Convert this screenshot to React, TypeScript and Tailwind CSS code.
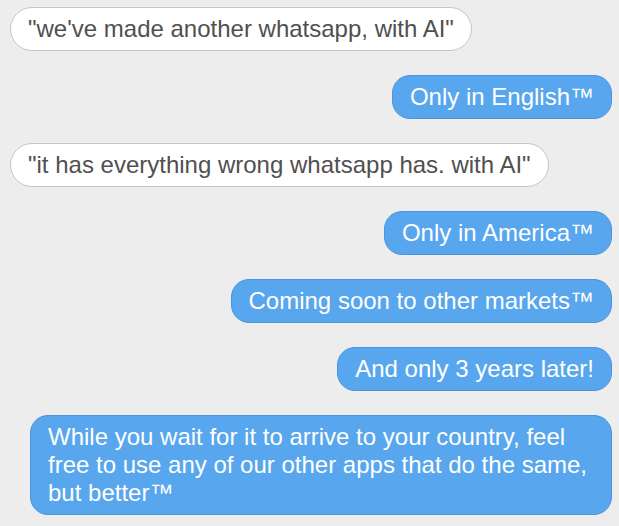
import React from 'react';

type Msg = { text: string; mine: boolean };

const messages: Msg[] = [
  { text: '"we\'ve made another whatsapp, with AI"', mine: false },
  { text: 'Only in English™', mine: true },
  { text: '"it has everything wrong whatsapp has. with AI"', mine: false },
  { text: 'Only in America™', mine: true },
  { text: 'Coming soon to other markets™', mine: true },
  { text: 'And only 3 years later!', mine: true },
  {
    text: 'While you wait for it to arrive to your country, feel free to use any of our other apps that do the same, but better™',
    mine: true,
  },
];

const Bubble: React.FC<{ msg: Msg }> = ({ msg }) => (
  <div className={msg.mine ? 'flex justify-end' : 'flex justify-start'}>
    <div
      className={
        msg.mine
          ? 'max-w-[582px] rounded-[18px] border border-[#4b93dc] bg-[#58a6ed] px-[17px] py-[7px] text-white'
          : 'max-w-[582px] rounded-[22px] border border-[#c6c6c6] bg-white px-[17px] py-[7px] text-[#505050]'
      }
    >
      <p className="text-[24px] leading-[28px]">{msg.text}</p>
    </div>
  </div>
);

export default function App() {
  return (
    <div
      className="min-h-[526px] w-[619px] bg-[#ededed] pb-[10px] pl-[10px] pr-[7px] pt-[7px]"
      style={{ fontFamily: '"Liberation Sans", Arial, sans-serif' }}
    >
      <div className="flex flex-col gap-[24px]">
        {messages.map((m, i) => (
          <Bubble key={i} msg={m} />
        ))}
      </div>
    </div>
  );
}
